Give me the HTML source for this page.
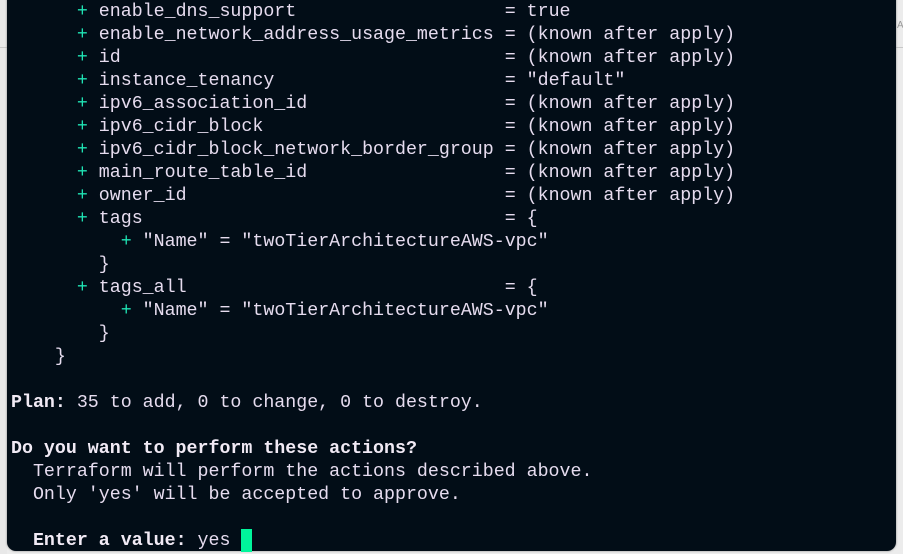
<!DOCTYPE html>
<html><head><style>
html,body{margin:0;padding:0;width:903px;height:554px;overflow:hidden;background:#ececec;}
.side{position:absolute;top:0;bottom:0;background:#e8e8e8;}
.term{position:absolute;left:7px;top:-10px;width:889px;height:561px;background:#020d17;border-radius:0 0 9px 9px;box-shadow:0 0 2px #888;}
pre{position:absolute;left:11px;top:1px;margin:0;font-family:"Liberation Mono",monospace;font-size:18.3px;line-height:23px;color:#e6dcef;}
.g{color:#1fe3b4;}
b{font-weight:bold;color:#f1eaf5;}
.cur{display:inline-block;width:11px;height:23px;background:#00f59b;vertical-align:top;margin-top:-1px;}
</style></head><body>
<div class="side" style="left:0;width:7px;border-bottom:0"></div>
<div style="position:absolute;left:0;top:47px;width:7px;height:1px;background:#c8c8c8"></div>
<div style="position:absolute;left:896px;top:47px;width:7px;height:1px;background:#c8c8c8"></div>
<div style="position:absolute;left:897px;top:20px;font:10px 'Liberation Sans',sans-serif;color:#999">AV</div>
<div class="term"></div>
<pre>      <span class="g">+</span> enable_dns_support                   = true
      <span class="g">+</span> enable_network_address_usage_metrics = (known after apply)
      <span class="g">+</span> id                                   = (known after apply)
      <span class="g">+</span> instance_tenancy                     = "default"
      <span class="g">+</span> ipv6_association_id                  = (known after apply)
      <span class="g">+</span> ipv6_cidr_block                      = (known after apply)
      <span class="g">+</span> ipv6_cidr_block_network_border_group = (known after apply)
      <span class="g">+</span> main_route_table_id                  = (known after apply)
      <span class="g">+</span> owner_id                             = (known after apply)
      <span class="g">+</span> tags                                 = {
          <span class="g">+</span> "Name" = "twoTierArchitectureAWS-vpc"
        }
      <span class="g">+</span> tags_all                             = {
          <span class="g">+</span> "Name" = "twoTierArchitectureAWS-vpc"
        }
    }

<b>Plan:</b> 35 to add, 0 to change, 0 to destroy.

<b>Do you want to perform these actions?</b>
  Terraform will perform the actions described above.
  Only 'yes' will be accepted to approve.

  <b>Enter a value:</b> yes <span class="cur"></span></pre>
</body></html>
